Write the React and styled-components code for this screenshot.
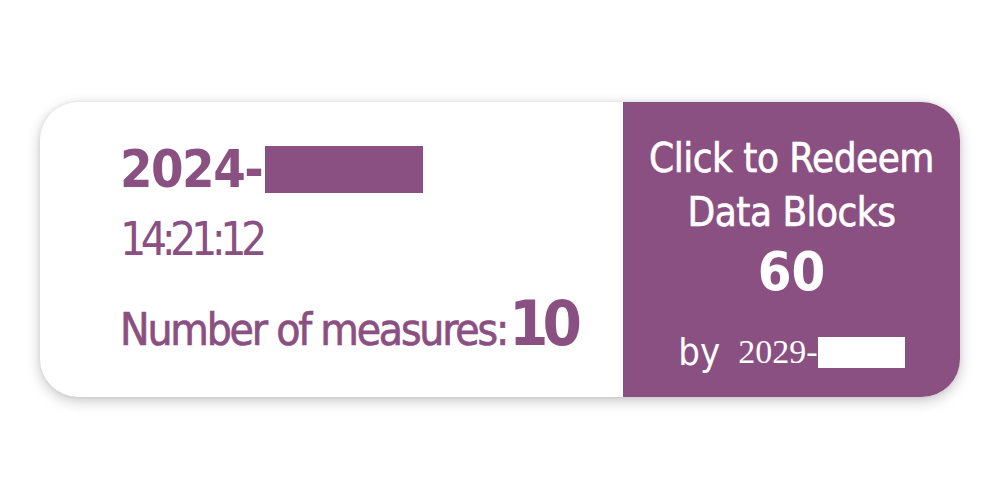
import React from "react";
import styled, { createGlobalStyle } from "styled-components";

const Global = createGlobalStyle`
  html, body { margin: 0; padding: 0; background: #ffffff; }
  body { font-family: "DejaVu Sans Condensed", "DejaVu Sans", sans-serif; }
`;

const PURPLE = "#8b5082";

const Page = styled.div`
  width: 1000px;
  height: 500px;
  padding: 102px 40px 0 40px;
  box-sizing: border-box;
`;

const Card = styled.div`
  display: flex;
  width: 920px;
  height: 295px;
  border-radius: 38px;
  overflow: hidden;
  background: #ffffff;
  box-shadow: 0 4px 14px rgba(0, 0, 0, 0.22), 0 0 4px rgba(0, 0, 0, 0.08);
`;

const Left = styled.div`
  flex: 0 0 583px;
  display: flex;
  flex-direction: column;
  padding: 37px 0 0 80px;
  box-sizing: border-box;
  color: ${PURPLE};
`;

const DateLine = styled.div`
  display: flex;
  align-items: center;
  font-size: 52px;
  font-weight: 700;
  line-height: 60px;
  letter-spacing: -1.5px;
`;

const Redact = styled.span`
  display: inline-block;
  width: ${(p) => p.$w}px;
  height: ${(p) => p.$h}px;
  background: ${(p) => p.$color};
  margin-left: ${(p) => p.$ml || 0}px;
`;

const TimeLine = styled.div`
  margin-top: 14px;
  font-size: 46px;
  line-height: 52px;
  letter-spacing: -5.5px;
`;

const Measures = styled.div`
  margin-top: 22px;
  display: flex;
  align-items: baseline;
  font-size: 44px;
  letter-spacing: -2.2px;
  -webkit-text-stroke: 0.7px ${PURPLE};
`;

const BigNum = styled.span`
  font-size: 63px;
  font-weight: 700;
  letter-spacing: -6px;
  margin-left: 2px;
  -webkit-text-stroke: 0;
`;

const Right = styled.div`
  flex: 1;
  background: ${PURPLE};
  color: #ffffff;
  display: flex;
  flex-direction: column;
  align-items: center;
  padding-top: 29px;
  box-sizing: border-box;
`;

const Title = styled.div`
  font-size: 40px;
  line-height: 54px;
  text-align: center;
  letter-spacing: -0.5px;
  -webkit-text-stroke: 0.6px #ffffff;
`;

const Count = styled.div`
  font-size: 54px;
  font-weight: 700;
  line-height: 60px;
  margin-top: 3px;
`;

const By = styled.div`
  display: flex;
  align-items: center;
  margin-top: 30px;
  font-size: 38px;
  line-height: 40px;
`;

const Serif = styled.span`
  font-family: "Liberation Serif", serif;
  font-size: 34px;
  margin-left: 18px;
`;

export default function App() {
  return (
    <>
      <Global />
      <Page>
        <Card>
          <Left>
            <DateLine>
              2024-
              <Redact $w={158} $h={47} $color={PURPLE} $ml={3} />
            </DateLine>
            <TimeLine>14:21:12</TimeLine>
            <Measures>
              Number of measures:<BigNum>10</BigNum>
            </Measures>
          </Left>
          <Right>
            <Title>
              Click to Redeem
              <br />
              Data Blocks
            </Title>
            <Count>60</Count>
            <By>
              by<Serif>2029-</Serif>
              <Redact $w={87} $h={31} $color="#ffffff" />
            </By>
          </Right>
        </Card>
      </Page>
    </>
  );
}
